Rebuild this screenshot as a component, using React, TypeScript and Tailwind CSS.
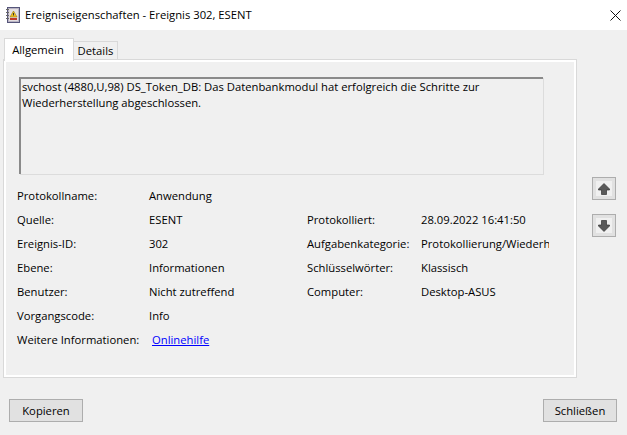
const font = { fontFamily: '"Open Sans", "Noto Sans", sans-serif' };

function EventLogIcon() {
  return (
    <svg width="14" height="16" viewBox="0 0 14 16" className="shrink-0">
      <rect x="1.5" y="0.5" width="12" height="15" fill="#b9b4c4" stroke="#55557a" />
      <rect x="3" y="2" width="9" height="12" fill="#e4dfe0" />
      <rect x="0" y="2" width="3" height="1" fill="#666" />
      <rect x="0" y="5" width="3" height="1" fill="#666" />
      <rect x="0" y="8" width="3" height="1" fill="#666" />
      <rect x="0" y="11" width="3" height="1" fill="#666" />
      <path d="M7.5 4 L11 10 H4 Z" fill="#f0c020" stroke="#9a7a10" strokeWidth="0.6" />
      <rect x="7" y="6" width="1" height="2.5" fill="#333" />
      <rect x="4" y="11" width="7" height="2" fill="#c0392b" />
    </svg>
  );
}

function CloseIcon() {
  return (
    <svg width="11" height="11" viewBox="0 0 11 11" className="shrink-0">
      <path d="M0.5 0.5 L10.5 10.5 M10.5 0.5 L0.5 10.5" stroke="#111" strokeWidth="1" fill="none" />
    </svg>
  );
}

function ArrowButton({ down }: { down?: boolean }) {
  return (
    <button className="flex h-[23px] w-6 items-center justify-center border border-[#adadad] bg-[#e1e1e1]">
      <span className="flex h-[15px] w-4 items-center justify-center bg-[#f0f0f0]">
        <svg width="12" height="12" viewBox="0 0 12 12" className={down ? "rotate-180" : ""}>
          <path d="M6 0.5 L11.5 6 V7 H8.5 V11.5 H3.5 V7 H0.5 V6 Z" fill="#5a5a5a" stroke="#333" strokeWidth="0.7" />
        </svg>
      </span>
    </button>
  );
}

function Field({ label, value }: { label: string; value: string }) {
  return (
    <div className="flex h-6 items-center">
      <span className="w-[132px] shrink-0">{label}</span>
      <span>{value}</span>
    </div>
  );
}

function RightField({ label, value }: { label: string; value: string }) {
  return (
    <div className="flex h-6 items-center">
      <span className="w-[114px] shrink-0">{label}</span>
      <span className="w-[128px] overflow-hidden whitespace-nowrap">{value}</span>
    </div>
  );
}

export default function App() {
  return (
    <div className="flex h-[435px] w-[627px] flex-col overflow-hidden bg-[#f0f0f0] text-[11.25px] leading-4 text-black" style={font}>
      <div className="flex h-[30px] shrink-0 items-center bg-white pl-[6px] pr-[6px]">
        <EventLogIcon />
        <span className="ml-[5px] flex-1">Ereigniseigenschaften - Ereignis 302, ESENT</span>
        <CloseIcon />
      </div>

      <div className="flex items-end pl-1 pt-[8px]">
        <div className="z-10 -mb-px flex h-[23px] w-[70px] items-center justify-center border border-b-0 border-[#d9d9d9] bg-white pr-[2px]">Allgemein</div>
        <div className="flex h-[19px] w-[44px] items-center justify-center border border-b-0 border-l-0 border-[#d9d9d9] bg-[#f0f0f0]">Details</div>
      </div>

      <div className="flex">
        <div className="ml-1 h-[317px] w-[572px] border-2 border-white pl-[13px] pt-[15px] outline outline-1 outline-[#d9d9d9]">
          <div className="h-[97px] w-[524px] border-2 border-b-0 border-r-0 border-[#8a8a8a] pl-[1px] shadow-[1px_1px_0_#dcdcdc]">
            <div className="w-[500px]">svchost (4880,U,98) DS_Token_DB: Das Datenbankmodul hat erfolgreich die Schritte zur Wiederherstellung abgeschlossen.</div>
          </div>

          <div className="-ml-[2px] mt-[10px] flex">
            <div className="w-[290px] shrink-0">
              <Field label="Protokollname:" value="Anwendung" />
              <Field label="Quelle:" value="ESENT" />
              <Field label="Ereignis-ID:" value="302" />
              <Field label="Ebene:" value="Informationen" />
              <Field label="Benutzer:" value="Nicht zutreffend" />
              <Field label="Vorgangscode:" value="Info" />
              <div className="flex h-6 items-center">
                <span className="w-[135px] shrink-0">Weitere Informationen:</span>
                <a className="text-[#0000ff] underline">Onlinehilfe</a>
              </div>
            </div>
            <div className="pt-6">
              <RightField label="Protokolliert:" value="28.09.2022 16:41:50" />
              <RightField label="Aufgabenkategorie:" value="Protokollierung/Wiederherstellung" />
              <RightField label="Schlüsselwörter:" value="Klassisch" />
              <RightField label="Computer:" value="Desktop-ASUS" />
            </div>
          </div>
        </div>

        <div className="ml-[16px] mt-[117px] flex flex-col gap-[14px]">
          <ArrowButton />
          <ArrowButton down />
        </div>
      </div>

      <div className="mt-[22px] flex justify-between pl-[9px] pr-[10px]">
        <button className="h-[23px] w-[74px] border border-[#adadad] bg-[#e1e1e1]">Kopieren</button>
        <button className="h-[23px] w-[74px] border border-[#adadad] bg-[#e1e1e1]">Schließen</button>
      </div>
    </div>
  );
}
